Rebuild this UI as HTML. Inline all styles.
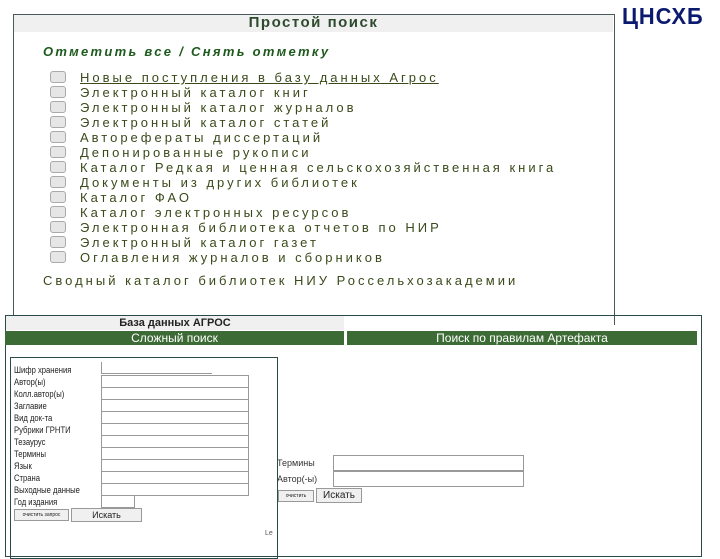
<!DOCTYPE html>
<html><head><meta charset="utf-8"><style>
body{margin:0;width:720px;height:540px;background:#fff;position:relative;overflow:hidden;font-family:"Liberation Sans",sans-serif}
.a{position:absolute}
#top{left:13px;top:14px;width:600px;height:310px;border:1px solid #4a5a5a;border-bottom:none}
#th{left:14px;top:15px;width:599px;height:17px;background:#f0f0f0;text-align:center;font-weight:bold;font-size:15px;color:#2e4a2e;line-height:16px;letter-spacing:1.5px}
#logo{left:622px;top:3px;font-size:23px;font-weight:bold;color:#0b1a6e;transform:scaleX(0.95);transform-origin:left;letter-spacing:1px}
#mark{left:43px;top:44px;font-size:13px;font-style:italic;font-weight:bold;color:#1e5a1e;letter-spacing:2.3px}
.it{position:absolute;left:50px;font-size:13px;color:#3a4a1a;letter-spacing:3px;line-height:14px;white-space:nowrap}
.it i{display:inline-block;width:14px;height:10px;border:1px solid #aaa;border-radius:3px;background:#e6e6e6;vertical-align:middle;margin-right:14px;margin-top:-4px}
#bot{left:5px;top:315px;width:695px;height:240px;border:1px solid #2d4a4a}
.g{position:absolute;top:331px;height:14px;background:#3d6b35;color:#fff;font-size:12px;text-align:center;line-height:14px}
#box{left:10px;top:357px;width:266px;height:200px;border:1px solid #2d4a4a}
.l{position:absolute;left:14px;font-size:9px;color:#222;transform:scaleX(.85);transform-origin:left}
.in{position:absolute;left:101px;width:146px;height:11px;border:1px solid #999;background:#fff}
.b{position:absolute;border:1px solid #999;background:#f0f0f0;font-size:9px;text-align:center;color:#222}
</style></head><body>
<div class="a" id="top"></div>
<div class="a" id="th">Простой поиск</div>
<div class="a" id="logo">ЦНСХБ</div>
<div class="a" id="mark">Отметить все / Снять отметку</div>
<div class="it" style="top:71px"><i></i><u>Новые поступления в базу данных Агрос</u></div>
<div class="it" style="top:86px"><i></i>Электронный каталог книг</div>
<div class="it" style="top:101px"><i></i>Электронный каталог журналов</div>
<div class="it" style="top:116px"><i></i>Электронный каталог статей</div>
<div class="it" style="top:131px"><i></i>Автореферaты диссертаций</div>
<div class="it" style="top:146px"><i></i>Депонированные рукописи</div>
<div class="it" style="top:161px"><i></i>Каталог Редкая и ценная сельскохозяйственная книга</div>
<div class="it" style="top:176px"><i></i>Документы из других библиотек</div>
<div class="it" style="top:191px"><i></i>Каталог ФАО</div>
<div class="it" style="top:206px"><i></i>Каталог электронных ресурсов</div>
<div class="it" style="top:221px"><i></i>Электронная библиотека отчетов по НИР</div>
<div class="it" style="top:236px"><i></i>Электронный каталог газет</div>
<div class="it" style="top:251px"><i></i>Оглавления журналов и сборников</div>
<div class="it" style="top:274px;left:43px">Сводный каталог библиотек НИУ Россельхозакадемии</div>
<div class="a" id="bot"></div>
<div class="a" style="left:6px;top:316px;width:338px;height:14px;background:#f0f0f0;text-align:center;font-size:11px;font-weight:bold;color:#222;line-height:14px">База данных АГРОС</div>
<div class="g" style="left:5px;width:339px">Сложный поиск</div>
<div class="g" style="left:347px;width:350px">Поиск по правилам Артефакта</div>
<div class="a" id="box"></div>
<div class="l" style="top:365px">Шифр хранения</div>
<div class="l" style="top:377px">Автор(ы)</div>
<div class="l" style="top:389px">Колл.автор(ы)</div>
<div class="l" style="top:401px">Заглавие</div>
<div class="l" style="top:413px">Вид док-та</div>
<div class="l" style="top:425px">Рубрики ГРНТИ</div>
<div class="l" style="top:437px">Тезаурус</div>
<div class="l" style="top:449px">Термины</div>
<div class="l" style="top:461px">Язык</div>
<div class="l" style="top:473px">Страна</div>
<div class="l" style="top:485px">Выходные данные</div>
<div class="l" style="top:497px">Год издания</div>
<div class="a" style="left:101px;top:362px;width:110px;height:11px;border-left:1px solid #999;border-bottom:1px solid #999"></div>
<div class="in" style="top:375px"></div><div class="in" style="top:387px"></div><div class="in" style="top:399px"></div><div class="in" style="top:411px"></div><div class="in" style="top:423px"></div><div class="in" style="top:435px"></div><div class="in" style="top:447px"></div><div class="in" style="top:459px"></div><div class="in" style="top:471px"></div><div class="in" style="top:483px"></div>
<div class="in" style="top:495px;width:32px"></div>
<div class="b" style="left:14px;top:509px;width:53px;height:10px;font-size:5px;line-height:10px">очистить запрос</div>
<div class="b" style="left:71px;top:508px;width:69px;height:12px;line-height:12px">Искать</div>
<div class="a" style="left:265px;top:530px;font-size:7px;color:#555">Le</div>
<div class="a" style="left:277px;top:458px;font-size:9px;color:#333">Термины</div>
<div class="a" style="left:277px;top:474px;font-size:9px;color:#333">Автор(-ы)</div>
<div class="a" style="left:333px;top:455px;width:189px;height:14px;border:1px solid #999"></div>
<div class="a" style="left:333px;top:471px;width:189px;height:14px;border:1px solid #999"></div>
<div class="b" style="left:278px;top:490px;width:34px;height:10px;font-size:5px;line-height:10px">очистить</div>
<div class="b" style="left:316px;top:488px;width:44px;height:13px;line-height:13px;font-size:10px">Искать</div>
</body></html>
